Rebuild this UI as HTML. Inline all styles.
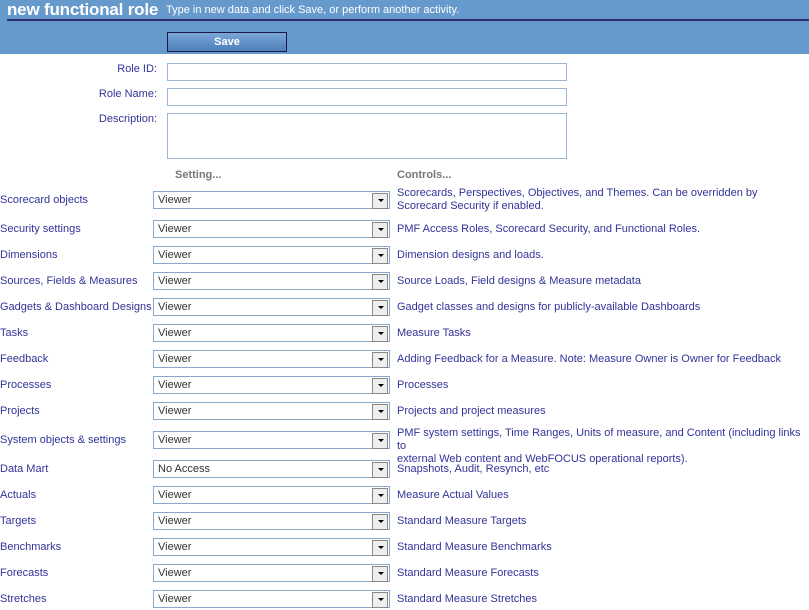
<!DOCTYPE html>
<html><head><meta charset="utf-8"><style>
*{margin:0;padding:0;box-sizing:border-box}
body{width:809px;height:610px;overflow:hidden;background:#fff;font-family:"Liberation Sans",Arial,sans-serif;font-size:11px;color:#333399;position:relative}
.hdr{position:absolute;left:0;top:0;width:809px;height:54px;background:#6699cc}
.title{position:absolute;left:7px;top:0;font-size:17px;font-weight:bold;color:#fff;letter-spacing:-0.2px}
.sub{position:absolute;left:166px;top:4px;font-size:11px;color:#fff}
.line{position:absolute;left:7px;top:19px;width:802px;height:2px;background:#2c2c70}
.save{position:absolute;left:167px;top:32px;width:120px;height:20px;border:1px solid #1a1a4a;background:linear-gradient(#7ba6da,#4d7fb8);color:#fff;font-weight:bold;font-size:11px;text-align:center;line-height:18px}
.lbl{position:absolute;right:652px;text-align:right}
.inp{position:absolute;left:167px;width:400px;border:1px solid #9ab8d4;background:#fff}
.hd{position:absolute;top:169px;font-weight:bold;color:#777;font-size:11px}
.r{position:absolute;left:0}
.sel{position:absolute;left:153px;width:237px;height:18px;border:1px solid #8aa8c8;background:#fff;color:#333;padding-left:4px;line-height:16px}
.sel:after{content:"";position:absolute;right:1px;top:1px;width:14px;height:14px;border:1px solid #888;background:#eee}
.sel i{position:absolute;right:5px;top:7px;width:0;height:0;border-left:3px solid transparent;border-right:3px solid transparent;border-top:3px solid #000;z-index:2}
.c{position:absolute;left:397px;line-height:13px}
</style></head><body>
<div class="hdr"><div class="title">new functional role</div><div class="sub">Type in new data and click Save, or perform another activity.</div><div class="line"></div><div class="save">Save</div></div>
<div class="lbl" style="top:63px">Role ID:</div><div class="inp" style="top:63px;height:18px"></div>
<div class="lbl" style="top:88px">Role Name:</div><div class="inp" style="top:88px;height:18px"></div>
<div class="lbl" style="top:113px">Description:</div><div class="inp" style="top:113px;height:46px"></div>
<div class="hd" style="left:175px">Setting...</div><div class="hd" style="left:397px">Controls...</div>

<div class="r" style="top:194px">Scorecard objects</div><div class="sel" style="top:191px">Viewer<i></i></div><div class="c" style="top:187px">Scorecards, Perspectives, Objectives, and Themes. Can be overridden by<br>Scorecard Security if enabled.</div>
<div class="r" style="top:223px">Security settings</div><div class="sel" style="top:220px">Viewer<i></i></div><div class="c" style="top:223px">PMF Access Roles, Scorecard Security, and Functional Roles.</div>
<div class="r" style="top:249px">Dimensions</div><div class="sel" style="top:246px">Viewer<i></i></div><div class="c" style="top:249px">Dimension designs and loads.</div>
<div class="r" style="top:275px">Sources, Fields &amp; Measures</div><div class="sel" style="top:272px">Viewer<i></i></div><div class="c" style="top:275px">Source Loads, Field designs &amp; Measure metadata</div>
<div class="r" style="top:301px">Gadgets &amp; Dashboard Designs</div><div class="sel" style="top:298px">Viewer<i></i></div><div class="c" style="top:301px">Gadget classes and designs for publicly-available Dashboards</div>
<div class="r" style="top:327px">Tasks</div><div class="sel" style="top:324px">Viewer<i></i></div><div class="c" style="top:327px">Measure Tasks</div>
<div class="r" style="top:353px">Feedback</div><div class="sel" style="top:350px">Viewer<i></i></div><div class="c" style="top:353px">Adding Feedback for a Measure. Note: Measure Owner is Owner for Feedback</div>
<div class="r" style="top:379px">Processes</div><div class="sel" style="top:376px">Viewer<i></i></div><div class="c" style="top:379px">Processes</div>
<div class="r" style="top:405px">Projects</div><div class="sel" style="top:402px">Viewer<i></i></div><div class="c" style="top:405px">Projects and project measures</div>
<div class="r" style="top:434px">System objects &amp; settings</div><div class="sel" style="top:431px">Viewer<i></i></div><div class="c" style="top:427px">PMF system settings, Time Ranges, Units of measure, and Content (including links to<br>external Web content and WebFOCUS operational reports).</div>
<div class="r" style="top:463px">Data Mart</div><div class="sel" style="top:460px">No Access<i></i></div><div class="c" style="top:463px">Snapshots, Audit, Resynch, etc</div>
<div class="r" style="top:489px">Actuals</div><div class="sel" style="top:486px">Viewer<i></i></div><div class="c" style="top:489px">Measure Actual Values</div>
<div class="r" style="top:515px">Targets</div><div class="sel" style="top:512px">Viewer<i></i></div><div class="c" style="top:515px">Standard Measure Targets</div>
<div class="r" style="top:541px">Benchmarks</div><div class="sel" style="top:538px">Viewer<i></i></div><div class="c" style="top:541px">Standard Measure Benchmarks</div>
<div class="r" style="top:567px">Forecasts</div><div class="sel" style="top:564px">Viewer<i></i></div><div class="c" style="top:567px">Standard Measure Forecasts</div>
<div class="r" style="top:593px">Stretches</div><div class="sel" style="top:590px">Viewer<i></i></div><div class="c" style="top:593px">Standard Measure Stretches</div>
</body></html>
